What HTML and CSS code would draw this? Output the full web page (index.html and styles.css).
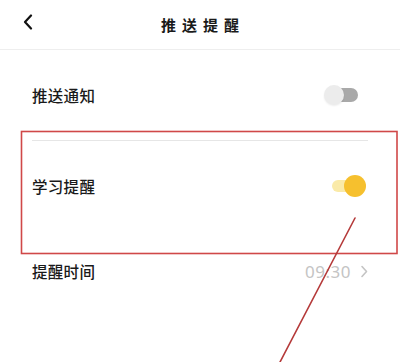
FILE: index.html
```html
<!DOCTYPE html>
<html lang="zh">
<head>
<meta charset="utf-8">
<link rel="stylesheet" href="styles.css">
</head>
<body>
<div class="page">
  <header class="topbar">
    <svg class="back" width="10" height="16" viewBox="0 0 10 16"><path d="M8 1.5 L2 8 L8 14.5" fill="none" stroke="#111" stroke-width="2.2" stroke-linecap="round" stroke-linejoin="round"/></svg>
    <h1 class="title">推送提醒</h1>
  </header>
  <div class="list">
    <div class="row row1">
      <span class="label">推送通知</span>
      <span class="toggle off"><span class="track"></span><span class="knob"></span></span>
    </div>
    <div class="sep"></div>
    <div class="row row2">
      <span class="label">学习提醒</span>
      <span class="toggle on"><span class="track"></span><span class="knob"></span></span>
    </div>
    <div class="row row3">
      <span class="label">提醒时间</span>
      <span class="value">09:30<svg class="chev" width="8" height="13" viewBox="0 0 8 13"><path d="M2 1.5 L6.5 6.5 L2 11.5" fill="none" stroke="#c4c4c4" stroke-width="1.6" stroke-linecap="round" stroke-linejoin="round"/></svg></span>
    </div>
  </div>
  <svg class="annot" width="400" height="362" viewBox="0 0 400 362">
    <rect x="21.5" y="131.5" width="375.5" height="122" fill="none" stroke="#d04848" stroke-width="1.6"/>
    <line x1="355" y1="218" x2="279" y2="364" stroke="#b53a3a" stroke-width="1.6" stroke-linecap="round"/>
  </svg>
</div>
</body>
</html>
```
FILE: styles.css
```css
* { box-sizing: border-box; margin: 0; padding: 0; }
html, body { width: 400px; height: 362px; overflow: hidden; background: #fff; }
body { font-family: "Noto Sans CJK SC", "Noto Sans", sans-serif; color: #1c1c1c; }
.page { position: relative; width: 400px; height: 362px; }
.topbar {
  height: 50px;
  border-bottom: 1px solid #eeeeee;
  display: flex;
  align-items: center;
  justify-content: center;
  position: relative;
}
.back { position: absolute; left: 23px; top: 14px; }
.title {
  font-size: 15px;
  font-weight: 700;
  letter-spacing: 6px;
  margin-left: 6px;
  color: #1a1a1a;
  line-height: 1;
}
.list { display: flex; flex-direction: column; }
.row {
  display: flex;
  align-items: center;
  justify-content: space-between;
  padding: 0 32px;
}
.row1 { height: 90px; }
.row2 { height: 89px; }
.row3 { height: 82px; }
.sep { height: 1px; background: #e6e6e6; margin: 0 32px; }
.label { font-size: 15.5px; font-weight: 500; color: #1a1a1a; letter-spacing: 0.3px; }
.toggle { position: relative; width: 34px; height: 22px; display: block; }
.toggle .track { position: absolute; top: 4px; height: 14px; width: 24px; border-radius: 7px; }
.toggle .knob { position: absolute; top: 1px; width: 20px; height: 20px; border-radius: 50%; }
.toggle.off { margin-right: 10px; }
.toggle.off .track { right: 0; background: #a9a9a9; }
.toggle.off .knob { left: 0; background: #ececec; box-shadow: 0 1px 2px rgba(0,0,0,0.08); }
.toggle.on { margin-right: 2px; }
.toggle.on .track { left: 0; top: 5px; height: 12px; background: #faeaa8; }
.toggle.on .knob { right: 0; top: 0; width: 22px; height: 22px; background: #f6c02e; }
.value {
  display: flex;
  align-items: center;
  gap: 9px;
  font-family: "Noto Sans", "Open Sans", sans-serif;
  font-size: 17px;
  color: #c4c4c4;
  letter-spacing: 0.5px;
}
.annot { position: absolute; left: 0; top: 0; }
```
